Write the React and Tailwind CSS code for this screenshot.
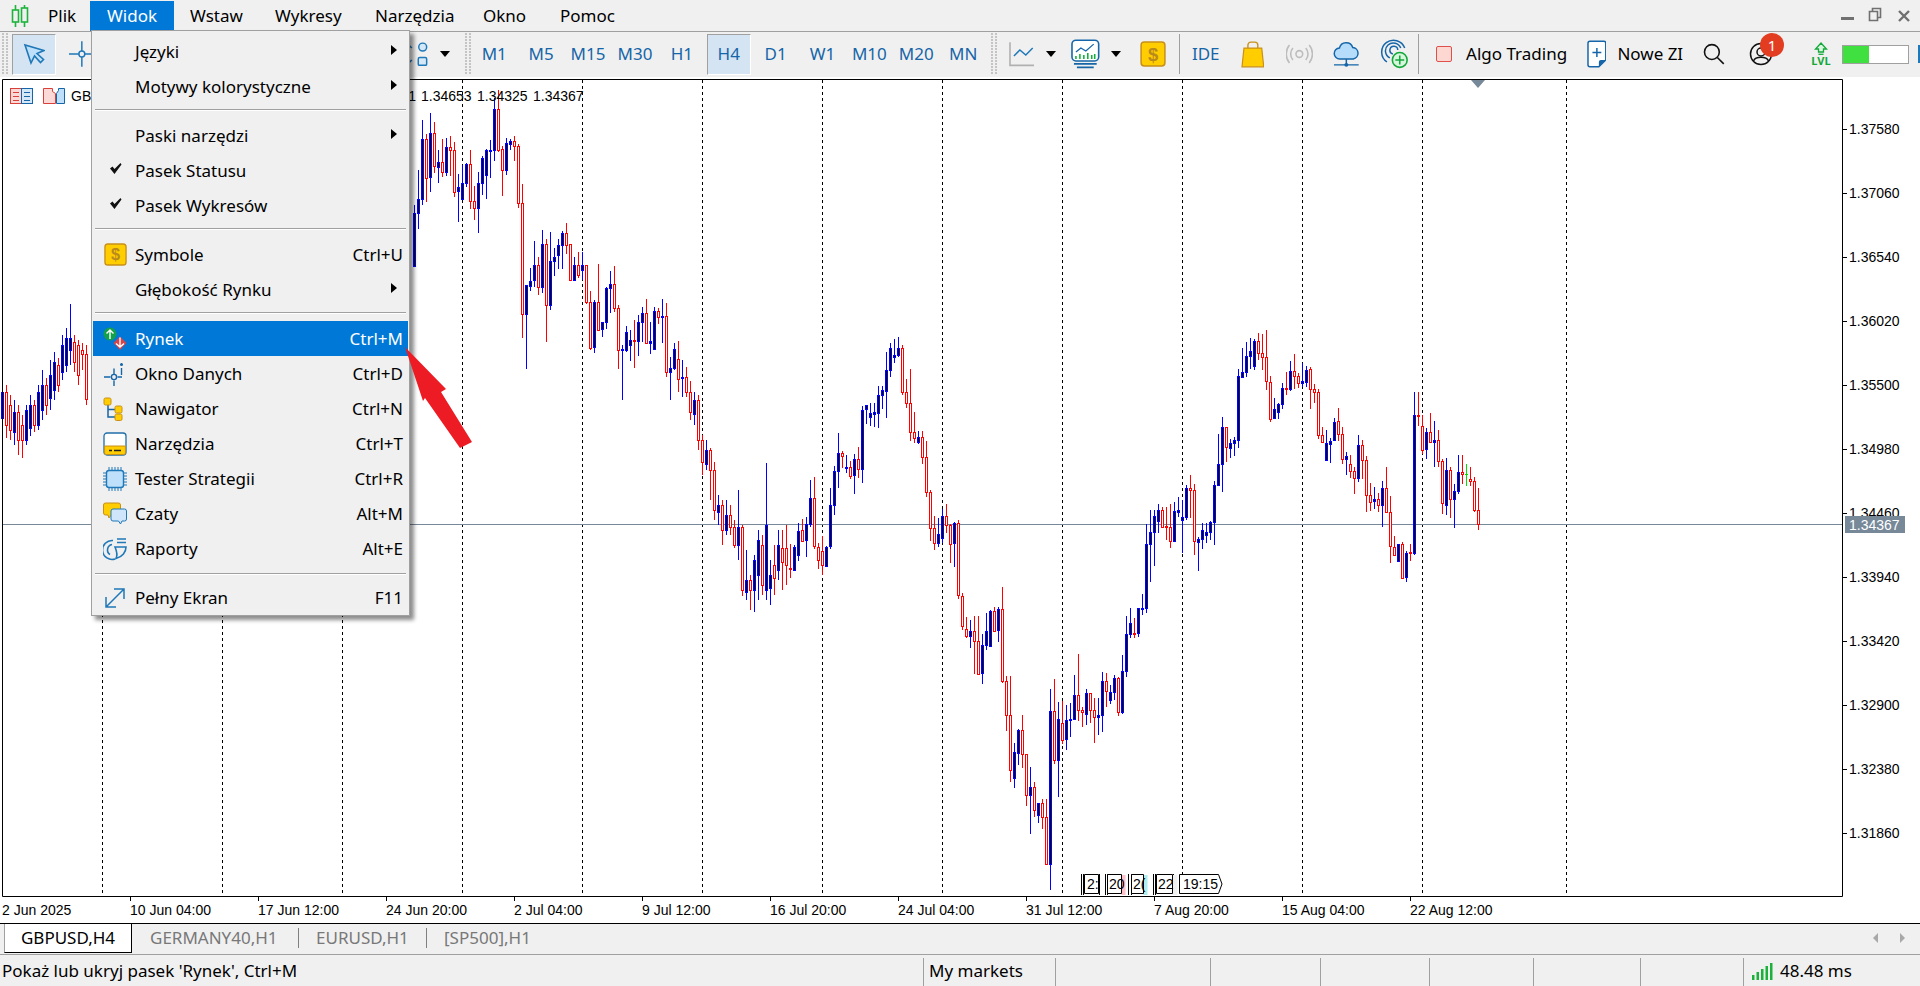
import React from "react";

const Z9 = [[43,'u',400,560,375,562],[55,'u',358,400,270,446],[67,'u',178,358,120,375],[79,'d',178,295,162,365],[91,'u',160,292,100,335],[103,'d',160,260,126,278],[115,'u',247,263,210,308],[127,'d',247,277,178,290],[139,'u',202,277,175,287],[151,'d',202,211,168,288],[163,'d',210,335,185,350],[175,'u',322,334,282,425],[187,'u',310,358,255,360],[199,'u',253,310,250,320],[211,'d',253,365,210,386],[223,'d',364,386,318,420],[235,'u',310,386,276,458],[247,'u',235,310,228,345],[259,'u',210,284,208,356],[271,'u',210,212,180,295],[283,'u',88,212,55,242],[295,'d',88,210,30,215],[307,'d',208,272,198,347],[319,'u',190,272,175,285],[331,'u',184,194,178,210],[343,'d',184,199,168,242],[355,'d',199,370,192,384],[367,'d',370,703,312,773],[379,'u',615,703,615,868],[391,'u',604,618,564,632],[403,'u',556,602,483,620],[415,'d',556,623,530,645],[427,'u',493,622,450,638],[439,'d',493,677,477,785],[451,'u',544,677,456,690],[463,'u',532,544,505,588],[475,'u',496,527,477,566],[487,'u',460,496,453,566],[499,'d',458,493,430,522],[511,'d',493,601,493,602],[523,'u',556,601,532,602],[535,'d',556,586,516,595],[547,'u',556,572,517,600],[559,'d',556,668,556,672],[571,'d',667,804,632,810],[583,'u',667,803,660,820],[595,'d',667,750,552,752],[607,'u',727,748,725,770],[619,'u',625,727,620,746],[631,'u',613,625,573,700],[643,'d',613,685,558,695],[655,'d',685,810,675,866],[667,'u',808,811,795,960],[679,'u',757,812,738,815],[691,'u',781,797,750,842],[703,'d',781,784,720,863],[715,'u',727,785,705,828],[727,'u',700,727,680,785],[739,'d',700,790,658,793],[751,'u',784,790,726,822],[763,'u',694,808,682,810],[775,'d',694,712,685,732],[787,'u',709,712,657,790],[799,'d',709,877,670,890],[811,'u',865,877,832,960],[823,'u',808,865,790,870],[835,'d',838,898,784,935],[847,'u',892,896,840,950]];

const GAP = [[171,'d',377,392,367,397],[172,'d',392,412,381,420],[173,'u',400,414,392,425],[174,'d',400,440,395,450],[175,'d',440,462,435,475],[176,'u',450,464,440,470],[177,'d',450,470,448,500],[178,'d',470,510,462,520],[179,'u',505,512,495,525],[180,'d',505,530,500,545],[181,'u',515,530,500,535],[182,'d',515,527,505,535],[183,'d',527,545,520,548],[184,'u',527,545,490,560],[185,'d',527,590,525,596],[186,'u',580,592,550,600],[187,'d',580,590,575,610],[188,'u',560,590,555,612],[189,'u',540,575,530,600],[190,'d',545,585,535,595],[191,'u',525,590,463,600],[192,'u',575,588,560,605],[193,'d',565,578,545,595],[194,'u',545,570,530,580],[195,'d',548,562,530,590],[196,'d',548,565,525,585]];

const Z10 = [[1,'d',745,748,672,775],[13,'u',682,750,675,752],[25,'u',632,704,610,722],[37,'d',630,662,598,662],[49,'u',613,662,590,710],[61,'u',535,613,480,620],[73,'d',535,680,472,686],[85,'d',680,718,670,746],[97,'d',694,737,647,765],[109,'u',680,737,678,740],[121,'u',556,680,503,686],[133,'u',454,557,438,585],[145,'u',400,455,339,503],[157,'d',400,410,394,443],[169,'u',441,443,405,459],[181,'d',441,467,423,477],[193,'u',418,467,403,522],[205,'d',418,448,381,474],[217,'u',271,448,258,489],[229,'u',256,268,256,312],[241,'u',279,290,250,318],[253,'u',276,281,250,322],[265,'u',226,281,198,324],[277,'u',211,227,198,268],[289,'u',151,215,96,294],[301,'u',85,151,70,171],[313,'u',106,113,57,129],[325,'u',85,107,52,110],[337,'d',85,218,76,224],[349,'d',217,250,178,264],[361,'d',250,337,148,363],[373,'d',337,356,277,370],[385,'u',352,368,334,372],[397,'d',352,412,334,432],[409,'d',412,518,364,530],[421,'d',517,626,511,662],[433,'d',625,670,588,690],[445,'u',643,671,594,680],[457,'u',589,656,568,670],[469,'d',589,617,552,638],[481,'d',614,670,612,728],[493,'u',610,671,606,741],[505,'d',610,827,601,836],[517,'d',829,920,820,930],[529,'d',928,950,892,953]];

const Z11 = [[91,'u',214,230,180,264],[103,'d',214,244,168,342],[115,'d',244,342,168,345],[127,'u',256,341,222,371],[139,'u',214,257,160,270],[151,'u',153,258,150,260],[163,'d',153,213,141,215],[175,'u',148,212,141,246],[187,'d',148,365,82,370],[199,'d',364,467,348,512],[211,'d',466,632,348,665],[223,'u',577,656,548,684],[235,'u',510,578,507,615],[247,'d',511,584,465,624],[259,'d',583,707,583,738],[271,'u',682,707,621,822],[283,'d',682,752,666,770],[295,'u',730,767,730,788],[307,'d',730,773,717,806],[319,'d',772,914,717,915],[331,'u',454,914,387,990],[343,'d',454,601,357,612],[355,'u',478,601,426,711],[367,'d',490,542,423,552],[379,'u',481,539,435,570],[391,'u',478,479,429,531],[403,'u',406,478,345,480],[415,'d',406,452,282,482],[427,'d',451,457,441,500],[439,'u',400,464,387,495],[451,'d',400,452,400,490],[463,'d',451,473,415,549],[475,'u',466,472,414,524],[487,'u',364,466,336,516],[499,'d',364,394,339,441],[511,'u',397,421,375,433],[523,'u',355,397,345,420],[535,'d',355,457,350,468],[547,'u',334,458,285,462],[559,'u',223,335,168,350],[571,'u',190,223,144,234],[583,'d',220,221,174,233],[595,'u',145,220,143,231],[607,'u',143,146,102,165]];

const Z12 = [[49,'u',672,863,612,878],[61,'u',637,674,570,785],[73,'u',589,637,570,737],[85,'u',570,602,552,640],[97,'d',570,621,562,623],[109,'d',618,622,562,660],[121,'d',622,665,552,683],[133,'u',574,665,546,665],[145,'u',571,576,531,590],[157,'u',592,602,540,700],[169,'u',505,593,495,600],[181,'d',505,511,465,595],[193,'d',511,665,492,705],[205,'u',657,665,650,752],[217,'u',631,659,610,687],[229,'u',636,644,609,668],[241,'u',606,637,602,660],[253,'u',496,607,482,675],[265,'u',433,497,342,498],[277,'u',322,433,292,515],[289,'d',322,382,322,425],[301,'u',370,386,358,414],[313,'u',361,371,352,408],[325,'u',169,361,148,383],[337,'u',157,171,84,175],[349,'u',109,157,66,170],[361,'u',94,110,54,146],[373,'u',64,140,56,150],[385,'d',64,100,40,121],[397,'d',100,112,42,150],[409,'d',112,185,30,210],[421,'d',185,296,168,305],[433,'u',268,296,234,296],[445,'u',253,278,248,296],[457,'u',205,254,189,266],[469,'d',205,208,155,225],[481,'u',154,208,124,212],[493,'d',154,170,102,208],[505,'d',169,191,158,204],[517,'u',184,190,130,200],[529,'u',149,185,138,200],[541,'d',148,208,140,266],[553,'d',208,217,193,250],[565,'d',217,347,208,357],[577,'d',346,368,322,370],[589,'u',370,422,330,422],[601,'u',362,371,354,428],[613,'u',307,362,294,362],[625,'d',304,344,265,364],[637,'d',343,418,322,433],[649,'u',409,418,396,464],[661,'d',433,454,405,475],[673,'d',454,475,442,521],[685,'u',376,476,345,486],[697,'d',376,421,361,478],[709,'d',421,526,408,575],[721,'d',526,547,490,572],[733,'u',538,544,502,566],[745,'d',538,556,518,575],[757,'u',505,556,483,620],[769,'d',505,577,441,580],[781,'d',577,680,527,728],[793,'d',680,704,648,707],[805,'u',673,724,673,724],[817,'d',673,774,665,775],[829,'u',700,772,693,786],[841,'d',697,700,672,722],[853,'u',286,701,216,705],[865,'d',286,289,216,318],[877,'d',317,388,286,402],[889,'u',337,389,323,418],[901,'d',337,368,279,370],[913,'u',361,367,303,440],[925,'d',361,424,330,440],[937,'d',424,551,418,582],[949,'u',451,556,415,585],[961,'d',451,538,441,593],[973,'u',514,538,492,623],[985,'u',457,514,405,522],[997,'d',457,463,405,492],[1009,'g',463,464,433,497],[1021,'d',478,484,442,497],[1033,'d',484,572,471,575],[1045,'d',571,613,504,630]];

const LEFT = [[0,'u',392,418,380,428],[1,'d',392,425,385,438],[2,'d',405,430,395,440],[3,'u',412,432,400,445],[4,'d',412,440,405,455],[5,'d',425,440,415,458],[6,'u',410,440,405,445],[7,'u',405,428,395,436],[8,'d',405,425,400,432],[9,'u',392,425,385,430],[10,'u',385,410,370,420],[11,'d',385,405,378,415],[12,'u',375,398,360,410],[13,'u',362,390,352,400],[14,'d',365,385,358,392],[15,'u',345,372,335,380],[16,'u',338,365,328,372],[17,'u',338,350,304,365],[18,'d',342,362,335,372],[19,'d',345,375,340,385],[20,'d',350,354,343,370],[21,'d',354,399,345,405]];

function buildCandles() {
  const out = [];
  const add = (list, x0, y0) => {
    list.forEach(([zx, k, t, b, wt, wb]) => {
      out.push({ n: Math.round((x0 + zx / 3 - 2.3) / 4), k, t: y0 + t / 3, b: y0 + b / 3, wt: y0 + wt / 3, wb: y0 + wb / 3 });
    });
  };
  add(Z9, 400, 80);
  GAP.forEach(([n, k, t, b, wt, wb]) => out.push({ n, k, t, b, wt, wb }));
  add(Z10, 790, 320);
  add(Z11, 940, 560);
  add(Z12, 1130, 320);
  LEFT.forEach(([n, k, t, b, wt, wb]) => out.push({ n, k, t, b, wt, wb }));
  return out;
}
const CANDLES = buildCandles();

const GRID_X = [102.5, 222.5, 342.5, 462.5, 582.5, 702.5, 822.5, 942.5, 1062.5, 1182.5, 1302.5, 1422.5, 1566.5];
const PRICES = [["1.37580",129],["1.37060",193],["1.36540",257],["1.36020",321],["1.35500",385],["1.34980",449],["1.34460",513],["1.33940",577],["1.33420",641],["1.32900",705],["1.32380",769],["1.31860",833]];
const TIMES = [["2 Jun 2025",2,false],["10 Jun 04:00",130,true],["17 Jun 12:00",258,true],["24 Jun 20:00",386,true],["2 Jul 04:00",514,true],["9 Jul 12:00",642,true],["16 Jul 20:00",770,true],["24 Jul 04:00",898,true],["31 Jul 12:00",1026,true],["7 Aug 20:00",1154,true],["15 Aug 04:00",1282,true],["22 Aug 12:00",1410,true]];

function Chart() {
  return (
    <svg viewBox="0 77 1920 846" className="block h-[846px] w-[1920px] bg-white font-['Liberation_Sans'] text-[14px]">
      {GRID_X.map((x) => (
        <line key={x} x1={x} x2={x} y1="80" y2="896" stroke="#000" strokeDasharray="3 3" shapeRendering="crispEdges" />
      ))}
      <line x1="2" x2="1842" y1="524.5" y2="524.5" stroke="#778899" />
      <g shapeRendering="crispEdges">
        {CANDLES.map((c, i) => {
          const cx = 2.5 + 4 * c.n;
          const col = c.k === "u" ? "#0000ff" : c.k === "g" ? "#00e000" : "#ff0000";
          const t = Math.round(c.t) + 0.5;
          const h = Math.max(1, Math.round(c.b - c.t));
          return (
            <g key={i}>
              <line x1={cx} x2={cx} y1={Math.round(c.wt)} y2={Math.round(c.wb)} stroke={col} />
              {c.k === "g" ? (
                <line x1={cx - 1.5} x2={cx + 1.5} y1={t} y2={t} stroke={col} />
              ) : (
                <rect x={cx - 1} y={t} width="2" height={h} fill={c.k === "u" ? "#000" : "#fff"} stroke={col} />
              )}
            </g>
          );
        })}
      </g>
      <path d="M2.5 79.500H1842.500V896.500H2.500Z" fill="none" stroke="#000" />
      <path d="M1471 80H1485L1478 88Z" fill="#778899" />
      {PRICES.map(([p, y]) => (
        <g key={p}>
          <line x1="1843" x2="1847" y1={y + 0.5} y2={y + 0.5} stroke="#000" />
          <text x="1849" y={y + 5} fill="#000">{p}</text>
        </g>
      ))}
      <rect x="1845" y="516" width="60" height="17" fill="#778899" />
      <text x="1849" y="530" fill="#fff">1.34367</text>
      {TIMES.map(([t, x, tick]) => (
        <g key={t}>
          {tick && <line x1={x + 0.5} x2={x + 0.5} y1="897" y2="901" stroke="#000" />}
          <text x={x} y="915" fill="#000">{t}</text>
        </g>
      ))}
      <text x="71" y="101" fill="#000">GBP</text>
      <text x="416" y="101" textAnchor="end" fill="#000">1</text>
      <text x="421" y="101" fill="#000">1.34653</text>
      <text x="477" y="101" fill="#000">1.34325</text>
      <text x="533" y="101" fill="#000">1.34367</text>
      <g>
        <rect x="10.500" y="88.500" width="11" height="15" fill="#fbd9d6" stroke="#d9403a" />
        <rect x="21.500" y="88.500" width="11" height="15" fill="#d5e8f8" stroke="#1565a8" />
        <path d="M13 92.500h6M13 96.500h6M13 100.500h6" stroke="#d9403a" />
        <path d="M24 92.500h6M24 96.500h6M24 100.500h6" stroke="#1565a8" />
        <path d="M43.500 88.500h9v3l3 2v10h-12Z" fill="#fbd9d6" stroke="#d9403a" />
        <path d="M56.500 93.500l2-3v-2h6v15h-8Z" fill="#bfe0fa" stroke="#1565a8" />
      </g>
      <g fill="#000">
        <path d="M1081.500 874v21M1083.500 874v21M1099.500 874v21M1105.500 874v21M1107.500 874v21M1128.500 874v21M1131.500 874v21M1153.500 874v21M1155.500 874v21M1173.500 874v21" stroke="#000" />
        <rect x="1121.500" y="875" width="4" height="20" fill="#ffc0cb" />
        <rect x="1143.500" y="875" width="4" height="20" fill="#aeeeee" />
        <rect x="1172.500" y="875" width="5" height="20" fill="#f0f0f0" />
        <path d="M1084.500 874.500h14v19h-14ZM1107.500 874.500h14v19h-14ZM1131.500 874.500h12v19h-12ZM1156.500 874.500h16v19h-16Z" fill="#fff" stroke="#000" />
        <text x="1087" y="889">2:</text>
        <text x="1109" y="889">20</text>
        <text x="1133" y="889">2(</text>
        <text x="1158" y="889">22</text>
        <path d="M1179.500 874.500h39l3.500 9.500l-3.500 9.500h-39Z" fill="#fff" stroke="#000" />
        <text x="1183" y="889">19:15</text>
      </g>
    </svg>
  );
}

function Grip() {
  return (
    <svg width="6" height="42" viewBox="0 0 6 42" className="shrink-0">
      {Array.from({ length: 14 }).map((_, i) => (
        <g key={i} fill="#c4c4c4">
          <rect x="0" y={i * 3} width="2" height="2" />
          <rect x="4" y={i * 3} width="2" height="2" />
        </g>
      ))}
    </svg>
  );
}

function Tri({ className = "" }) {
  return <span className={"h-0 w-0 border-x-[5.5px] border-t-[6px] border-x-transparent border-t-black " + className} />;
}

function SubArrow() {
  return <span className="ml-auto mr-[11px] h-0 w-0 -translate-y-[2px] border-y-[5.5px] border-l-[6px] border-y-transparent border-l-black" />;
}

const DollarIcon = ({ size = 24 }) => (
  <svg width={size} height={size} viewBox="0 0 24 24" className="shrink-0">
    <rect x="1" y="1" width="22" height="22" rx="3" fill="#ffcd00" stroke="#c8901a" strokeWidth="1.4" />
    <text x="12" y="18" textAnchor="middle" fontSize="17" fontFamily="Liberation Sans" fontWeight="700" fill="#b98a1c">$</text>
  </svg>
);

const RynekIcon = () => (
  <svg width="24" height="24" viewBox="0 0 24 24">
    <circle cx="7" cy="7" r="6.500" fill="#12a14a" />
    <path d="M7 12V3M3.500 6.500L7 3l3.500 3.500" stroke="#fff" strokeWidth="1.400" fill="none" />
    <path d="M17 9.500l6.500 6.500-6.500 7-6.500-7Z" fill="#d9434a" />
    <path d="M17 10.500v9.500M13 16.500L17 20l4-3.500" stroke="#fff" strokeWidth="1.400" fill="none" />
  </svg>
);
const DataIcon = () => (
  <svg width="24" height="24" viewBox="0 0 24 24" fill="none" stroke="#1565a8" strokeWidth="1.400">
    <path d="M1 15h6.500M14.500 15H19M11 6.500V12M11 18.500V24" />
    <circle cx="11" cy="15" r="2.600" />
    <path d="M18.500 6v7" />
    <circle cx="18.500" cy="2.500" r="0.800" fill="#1565a8" />
  </svg>
);
const NavIcon = () => (
  <svg width="24" height="24" viewBox="0 0 24 24">
    <path d="M5 8v12h7M5 12.500h7" fill="none" stroke="#1565a8" strokeWidth="1.500" />
    <rect x="1" y="1" width="7" height="7" rx="1.500" fill="#ffcd00" stroke="#c8901a" />
    <rect x="12" y="9" width="7" height="7" rx="1.500" fill="#ffcd00" stroke="#c8901a" />
    <rect x="12" y="17" width="7" height="6.500" rx="1.500" fill="#ffcd00" stroke="#c8901a" />
  </svg>
);
const ToolsIcon = () => (
  <svg width="24" height="24" viewBox="0 0 24 24">
    <rect x="1" y="1" width="22" height="22" rx="3" fill="#fff" stroke="#1f6fa8" strokeWidth="1.300" />
    <path d="M1.600 14h20.800v7a1.600 1.600 0 0 1-1.600 1.600H3.200A1.600 1.600 0 0 1 1.600 21Z" fill="#ffcd00" stroke="#c8901a" />
    <path d="M6 18.500h3M11 18.500h7" stroke="#222" strokeWidth="1.400" />
  </svg>
);
const ChipIcon = () => (
  <svg width="24" height="24" viewBox="0 0 24 24">
    <path d="M6 0v24M9 0v24M12 0v24M15 0v24M18 0v24M0 6h24M0 9h24M0 12h24M0 15h24M0 18h24" stroke="#1f78b8" />
    <rect x="3.500" y="3.500" width="17" height="17" rx="2.500" fill="#bfe0fa" stroke="#1f78b8" strokeWidth="1.400" />
  </svg>
);
const ChatIcon = () => (
  <svg width="24" height="24" viewBox="0 0 24 24">
    <path d="M2.500 1h13a2 2 0 0 1 2 2v8a2 2 0 0 1-2 2H8l-2 3-1-3H2.500a2 2 0 0 1-2-2V3a2 2 0 0 1 2-2Z" fill="#ffcd00" stroke="#c8901a" />
    <path d="M10 7h11.500a2 2 0 0 1 2 2v8a2 2 0 0 1-2 2H19l-1.500 3-2-3H10a2 2 0 0 1-2-2V9a2 2 0 0 1 2-2Z" fill="#cfe6fa" stroke="#1f78b8" />
  </svg>
);
const ReportIcon = () => (
  <svg width="24" height="24" viewBox="0 0 24 24" fill="none" stroke="#1f78b8" strokeWidth="1.600">
    <path d="M10 3.500A9.500 9.500 0 1 0 12 22" />
    <path d="M9 7.500A5.500 5.500 0 0 0 7 17.500" />
    <path d="M14 2h9M14 5.500h9" />
    <path d="M12 10h11c0 5-3.500 10-10 11.500 2-4 1-7-1-11.500Z" />
  </svg>
);
const FullIcon = () => (
  <svg width="22" height="22" viewBox="0 0 22 22" fill="none" stroke="#1f78b8" strokeWidth="1.500">
    <path d="M2 20L20 2M10 2h10v10M2 10v10h10" />
  </svg>
);

const MENU = [
  [["Języki", null, "sub"], ["Motywy kolorystyczne", null, "sub"]],
  [["Paski narzędzi", null, "sub"], ["Pasek Statusu", null, "check"], ["Pasek Wykresów", null, "check"]],
  [["Symbole", "Ctrl+U", "", <DollarIcon size={23} key="a" />], ["Głębokość Rynku", null, "sub"]],
  [
    ["Rynek", "Ctrl+M", "hl", <RynekIcon key="a" />],
    ["Okno Danych", "Ctrl+D", "", <DataIcon key="a" />],
    ["Nawigator", "Ctrl+N", "", <NavIcon key="a" />],
    ["Narzędzia", "Ctrl+T", "", <ToolsIcon key="a" />],
    ["Tester Strategii", "Ctrl+R", "", <ChipIcon key="a" />],
    ["Czaty", "Alt+M", "", <ChatIcon key="a" />],
    ["Raporty", "Alt+E", "", <ReportIcon key="a" />],
  ],
  [["Pełny Ekran", "F11", "", <FullIcon key="a" />]],
];

function Menu() {
  return (
    <div className="absolute left-[91px] top-[30px] z-20 w-[319px] border border-[#a0a0a0] bg-[#f0f0f0] pt-[3px] shadow-[4px_4px_4px_rgba(0,0,0,0.45)]">
      {MENU.map((group, gi) => (
        <div key={gi}>
          {gi > 0 && (
            <div className={"h-[14px] px-[3px] " + (gi === 4 ? "pt-[7px]" : "pt-[5px]")}>
              <div className="h-[2px] w-full border-t border-[#a0a0a0] bg-white" />
            </div>
          )}
          {group.map(([label, shortcut, mode, icon]) => (
            <div key={label} className={"mx-[1px] flex h-[35px] items-center " + (mode === "hl" ? "bg-[#0078d7] text-white" : "text-black")}>
              <div className="flex w-[42px] shrink-0 items-center justify-center pl-[2px]">
                {mode === "check" ? (
                  <svg width="13" height="13" viewBox="0 0 13 13" className="-translate-y-[2px]">
                    <path d="M1 6.500l2.500-2 2 2.500L11.500 1l1 1.500L5.500 12Z" fill="#111" />
                  </svg>
                ) : (
                  icon
                )}
              </div>
              <span className="whitespace-nowrap">{label}</span>
              {mode === "sub" && <SubArrow />}
              {shortcut && <span className={"ml-auto mr-[5px] " + (mode === "hl" ? "text-white" : "")}>{shortcut}</span>}
            </div>
          ))}
        </div>
      ))}
    </div>
  );
}

function MenuBar() {
  return (
    <div className="flex h-[32px] items-stretch border-b border-[#a0a0a0] bg-[#f0f0f0] pt-[1px]">
      <div className="flex w-[40px] shrink-0 items-center pl-[11px]">
        <svg width="18" height="22" viewBox="0 0 18 22" fill="none" stroke="#1db33c" strokeWidth="1.600">
          <path d="M4.500 0v22M13.500 0v22" />
          <rect x="1.500" y="5" width="6" height="12" fill="#f0f0f0" />
          <rect x="10.500" y="3" width="6" height="14" fill="#f0f0f0" />
        </svg>
      </div>
      <span className="ml-[8px] flex w-[42px] items-center">Plik</span>
      <span className="flex w-[84px] items-center justify-center bg-[#0078d7] text-white">Widok</span>
      <span className="ml-[16px] flex w-[85px] items-center">Wstaw</span>
      <span className="flex w-[100px] items-center">Wykresy</span>
      <span className="flex w-[108px] items-center">Narzędzia</span>
      <span className="flex w-[77px] items-center">Okno</span>
      <span className="flex items-center">Pomoc</span>
      <div className="ml-auto flex items-center pr-[9px]">
        <svg width="72" height="20" viewBox="0 0 72 20" fill="none" stroke="#707070">
          <path d="M2 12.500h13" strokeWidth="3" />
          <path d="M30.500 5.500h8v9h-8ZM33.500 5.500v-3h8v9h-3" strokeWidth="1.600" />
          <path d="M60 5l10 10M70 5L60 15" strokeWidth="2.400" />
        </svg>
      </div>
    </div>
  );
}

function TF({ label, active }) {
  return (
    <div className="flex w-[46.9px] shrink-0 items-center justify-center">
      <div className={"flex h-[41px] w-[44px] items-center justify-center text-[#1565a8] " + (active ? "border-b border-l border-r border-t border-b-white border-l-[#a0a0a0] border-r-white border-t-[#a0a0a0] bg-[#d5e4f2]" : "")}>
        {label}
      </div>
    </div>
  );
}

function Toolbar() {
  return (
    <div className="flex h-[45px] items-center bg-[#f0f0f0] pb-[1px]">
      <div className="ml-[2px]"><Grip /></div>
      <div className="ml-[4px] flex h-[41px] w-[44px] items-center justify-center border border-b-white border-l-[#a0a0a0] border-r-white border-t-[#a0a0a0] bg-[#d5e4f2]">
        <svg width="22" height="22" viewBox="0 0 22 22" fill="#bfe0fa" stroke="#1f78b8" strokeWidth="1.600"><path d="M2 2l6 18 3.500-7 6 6.500 3-3-6.500-6 7-3Z" /></svg>
      </div>
      <svg width="26" height="26" viewBox="0 0 26 26" fill="none" stroke="#1f78b8" strokeWidth="1.500" className="ml-[13px]">
        <path d="M0 13h10M16 13h10M13 0v10M13 16v10" /><circle cx="13" cy="13" r="3" />
      </svg>
      <svg width="32" height="24" viewBox="0 0 32 24" fill="none" stroke="#1f78b8" strokeWidth="1.500" className="ml-[304px]">
        <path d="M6 6l4-4 4 4M6 18l4 4 4-4" />
        <circle cx="25" cy="5" r="4" fill="#d5e8f8" />
        <rect x="20.500" y="15.500" width="8.500" height="8" rx="1.500" fill="#d5e8f8" />
      </svg>
      <Tri className="ml-[10px]" />
      <div className="ml-[15px]"><Grip /></div>
      <div className="flex">
        {["M1","M5","M15","M30","H1","H4","D1","W1","M10","M20","MN"].map((t) => <TF key={t} label={t} active={t === "H4"} />)}
      </div>
      <div className="ml-[4px]"><Grip /></div>
      <svg width="26" height="26" viewBox="0 0 26 26" fill="none" className="ml-[12px]">
        <path d="M1 1v23.500h25" stroke="#b0b0b0" strokeWidth="1.600" />
        <path d="M5 15l6-6 6 5 7-7" stroke="#1f78b8" strokeWidth="1.500" />
      </svg>
      <Tri className="ml-[12px]" />
      <svg width="30" height="30" viewBox="0 0 30 30" fill="none" className="ml-[15px]">
        <rect x="1" y="1" width="27" height="21" rx="4" stroke="#1565a8" strokeWidth="1.600" fill="#fff" />
        <path d="M5 13l5-4 5 3 8-7" stroke="#1565a8" strokeWidth="1.300" />
        <path d="M5 20v-3M9 20v-5M13 20v-4M17 20v-6M21 20v-4M24 20v-5" stroke="#13b13c" strokeWidth="1.600" />
        <path d="M3 25h23M6 28.500h17" stroke="#1565a8" strokeWidth="1.600" />
      </svg>
      <Tri className="ml-[10px]" />
      <div className="ml-[19px]"><DollarIcon size={26} /></div>
      <div className="ml-[13px] h-[40px] w-px bg-[#a0a0a0]" />
      <span className="ml-[12px] w-[30px] whitespace-nowrap text-[#1565a8]">IDE</span>
      <svg width="24" height="27" viewBox="0 0 24 27" className="ml-[19px]">
        <path d="M7 9V4a3 3 0 0 1 3-3h4a3 3 0 0 1 3 3v5" fill="none" stroke="#c8901a" strokeWidth="1.400" />
        <path d="M3 7h18l2 19H1Z" fill="#ffcd00" stroke="#c8901a" strokeWidth="1.200" />
      </svg>
      <svg width="27" height="20" viewBox="0 0 27 20" fill="none" stroke="#bdbdbd" strokeWidth="1.600" className="ml-[22px]">
        <circle cx="13.500" cy="10" r="3.400" /><path d="M7 4a9 9 0 0 0 0 12M20 4a9 9 0 0 1 0 12M3.500 1a14 14 0 0 0 0 18M23.500 1a14 14 0 0 1 0 18" />
      </svg>
      <svg width="27" height="27" viewBox="0 0 27 27" fill="none" className="ml-[20px]">
        <path d="M7 18a5.500 5.500 0 0 1-.5-11A7 7 0 0 1 20 6.500 5.800 5.800 0 0 1 20.500 18Z" fill="#b5dcfa" stroke="#1565a8" strokeWidth="1.500" />
        <path d="M13.500 18v6M1 24h25" stroke="#1565a8" strokeWidth="1.500" /><circle cx="13.500" cy="24" r="2" fill="#1565a8" />
      </svg>
      <svg width="29" height="30" viewBox="0 0 29 30" fill="none" className="ml-[20px]">
        <path d="M7 23A12 12 0 1 1 25 9M10 19a8 8 0 1 1 11-10M13 15a4 4 0 1 1 5-4" stroke="#1565a8" strokeWidth="1.500" />
        <circle cx="20" cy="21" r="7.500" fill="#d8f5dd" stroke="#13a83a" strokeWidth="1.600" />
        <path d="M20 16.500v9M15.500 21h9" stroke="#13a83a" strokeWidth="1.600" />
      </svg>
      <div className="ml-[10px] h-[40px] w-px bg-[#a0a0a0]" />
      <div className="ml-[17px] h-[16px] w-[16px] rounded-[2px] border-[1.5px] border-[#e0504a] bg-[#fdd8d2]" />
      <span className="ml-[14px] w-[122px] whitespace-nowrap text-black">Algo Trading</span>
      <svg width="20" height="28" viewBox="0 0 20 28" fill="none">
        <path d="M3 1h14a2 2 0 0 1 2 2v17l-7 7H3a2 2 0 0 1-2-2V3a2 2 0 0 1 2-2Z" fill="#fff" stroke="#1565a8" strokeWidth="1.500" />
        <path d="M19 20l-7 7v-5a2 2 0 0 1 2-2Z" fill="#1565a8" />
        <path d="M10 8v9M5.500 12.500h9" stroke="#1565a8" strokeWidth="1.500" />
      </svg>
      <span className="ml-[11px] w-[87px] whitespace-nowrap text-black">Nowe ZI</span>
      <svg width="22" height="22" viewBox="0 0 22 22" fill="none" stroke="#111" strokeWidth="1.600"><circle cx="9" cy="9" r="7.500" /><path d="M14.500 14.500L21 21" /></svg>
      <div className="relative ml-[24px] h-[24px] w-[24px]">
        <svg width="24" height="24" viewBox="0 0 24 24" fill="none" stroke="#111" strokeWidth="1.500"><circle cx="12" cy="12" r="10.500" /><circle cx="12" cy="10" r="4" /><path d="M4.500 19c2-5 13-5 15 0" /></svg>
        <span className="absolute -right-[11px] -top-[9px] flex h-[24px] w-[24px] items-center justify-center rounded-full bg-[#e23d20] text-[15px] leading-none text-white">1</span>
      </div>
      <div className="ml-[36px] flex w-[24px] flex-col items-center">
        <svg width="14" height="13" viewBox="0 0 14 13" fill="#d8f5dd" stroke="#13a83a" strokeWidth="1.300"><path d="M7 1l5.500 6H9.500v3h-5V7H1.500Z" /><path d="M4.500 12.300h5" /></svg>
        <span className="text-[11px] font-bold leading-[11px] text-[#13a83a]">LVL</span>
      </div>
      <div className="ml-[9px] flex h-[19px] w-[68px] border border-[#a0a0a0] bg-white">
        <div className="w-[26px] bg-[#40e040]" />
      </div>
      <div className="ml-[9px] h-[18px] w-[2px] bg-[#1f78b8]" />
    </div>
  );
}

function Tabs() {
  return (
    <div className="flex h-[31px] items-stretch border-t border-black bg-[#f0f0f0] pl-[4px] text-[#787878]">
      <div className="flex h-[29px] w-[128px] items-center justify-center border-x border-b border-b-black border-l-[#a0a0a0] border-r-black bg-white pb-[1px] text-black">GBPUSD,H4</div>
      <div className="flex items-center pb-[2px]">
        <span className="ml-[18px] w-[148px] whitespace-nowrap">GERMANY40,H1</span>
        <span className="h-[20px] w-px bg-[#808080]" />
        <span className="ml-[17px] w-[110px] whitespace-nowrap">EURUSD,H1</span>
        <span className="h-[20px] w-px bg-[#808080]" />
        <span className="ml-[17px]">[SP500],H1</span>
      </div>
      <div className="ml-auto flex items-center gap-[22px] pb-[2px] pr-[15px]">
        <span className="h-0 w-0 border-y-[5px] border-r-[5px] border-y-transparent border-r-[#a8a8a8]" />
        <span className="h-0 w-0 border-y-[5px] border-l-[5px] border-y-transparent border-l-[#a8a8a8]" />
      </div>
    </div>
  );
}

function StatusBar() {
  const cells = ["w-[132px]", "w-[155px]", "w-[110px]", "w-[109px]", "w-[104px]", "w-[107px]", "w-[103px]"];
  return (
    <div className="flex h-[32px] items-stretch border-t border-[#a0a0a0] bg-[#f0f0f0] text-black">
      <div className="flex w-[923px] shrink-0 items-center pl-[2px]">Pokaż lub ukryj pasek 'Rynek', Ctrl+M</div>
      {cells.map((w, i) => (
        <div key={i} className={"mt-[3px] flex shrink-0 items-center border-l border-[#a0a0a0] pb-[2px] pl-[5px] " + w}>{i === 0 ? "My markets" : ""}</div>
      ))}
      <div className="mt-[3px] flex flex-1 items-center border-l border-[#a0a0a0] pb-[2px] pl-[8px]">
        <svg width="22" height="17" viewBox="0 0 22 17" fill="#1bb13c">
          <rect x="0" y="12" width="2.500" height="5" /><rect x="4.500" y="9" width="2.500" height="8" /><rect x="9" y="6" width="2.500" height="11" /><rect x="13.500" y="3" width="2.500" height="14" /><rect x="18" y="0" width="2.500" height="17" />
        </svg>
        <span className="ml-[6px] whitespace-nowrap">48.48 ms</span>
      </div>
    </div>
  );
}

export default function App() {
  return (
    <div className="relative flex h-[986px] w-[1920px] flex-col overflow-hidden bg-white font-['Noto_Sans',sans-serif] text-[17px] leading-[22px] text-black">
      <MenuBar />
      <Toolbar />
      <Chart />
      <Tabs />
      <StatusBar />
      <Menu />
      <svg className="absolute left-[400px] top-[340px] z-30" width="80" height="115" viewBox="400 340 80 115">
        <path d="M405 347L446 389L441 392L472 442L460 448L425 398L423 401Z" fill="#ed1c24" />
      </svg>
    </div>
  );
}
